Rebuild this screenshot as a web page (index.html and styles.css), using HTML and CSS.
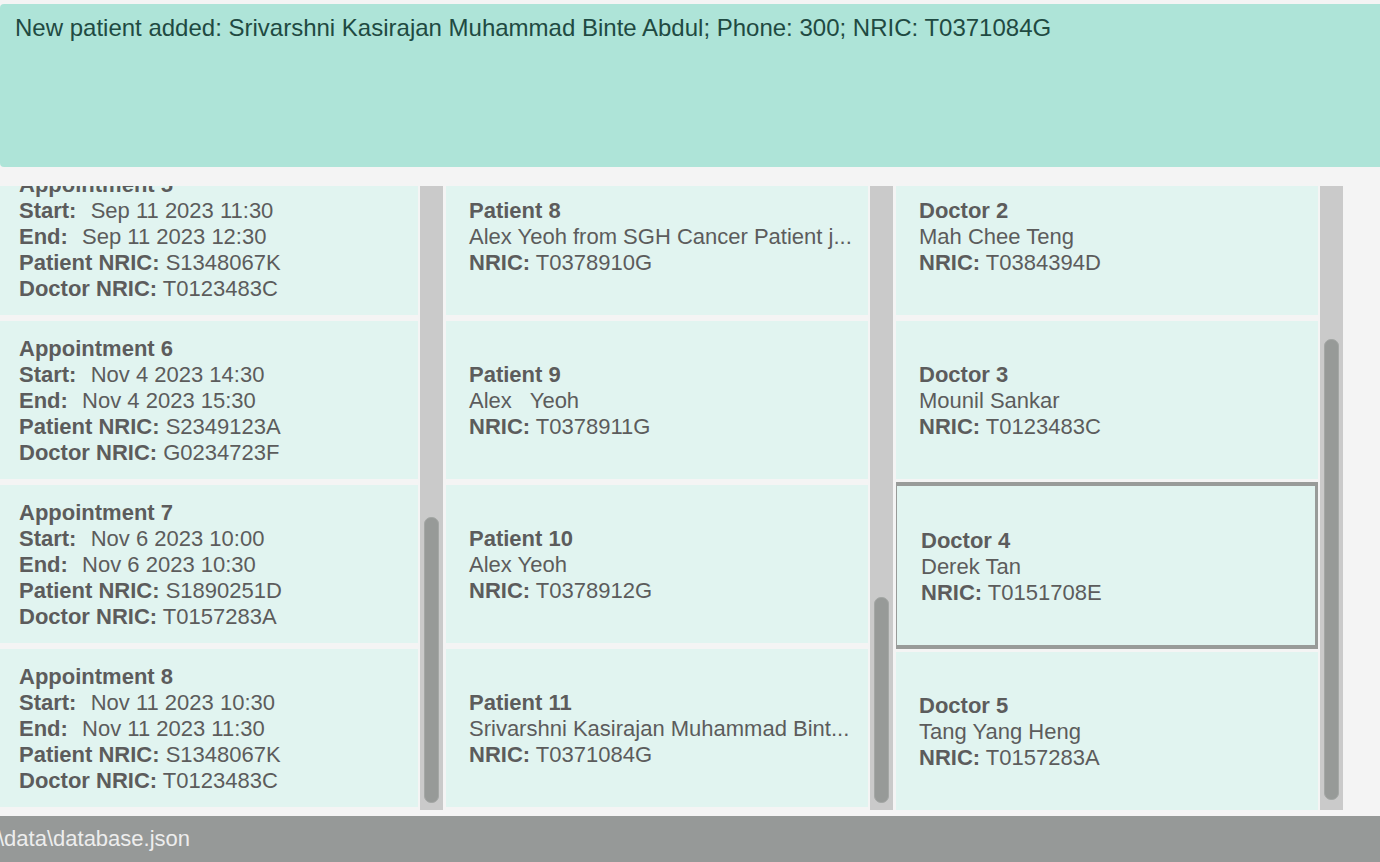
FILE: index.html
```html
<!DOCTYPE html>
<html lang="en">
<head>
<meta charset="utf-8">
<title>Clinic Assistant</title>
<link rel="stylesheet" href="styles.css">
</head>
<body>
<div class="app">
  <div class="result">
    <p class="result-text">New patient added: Srivarshni Kasirajan Muhammad Binte Abdul; Phone: 300; NRIC: T0371084G</p>
  </div>

  <div class="lists">
    <section class="panel">
      <div class="viewport">
        <div class="scroller">
          <div class="card appt">
            <div class="line title">Appointment 5</div>
            <div class="line"><b class="time">Start:</b>  Sep 11 2023 11:30</div>
            <div class="line"><b class="time">End:</b>  Sep 11 2023 12:30</div>
            <div class="line"><b>Patient NRIC:</b> S1348067K</div>
            <div class="line"><b>Doctor NRIC:</b> T0123483C</div>
          </div>
          <div class="card appt">
            <div class="line title">Appointment 6</div>
            <div class="line"><b class="time">Start:</b>  Nov 4 2023 14:30</div>
            <div class="line"><b class="time">End:</b>  Nov 4 2023 15:30</div>
            <div class="line"><b>Patient NRIC:</b> S2349123A</div>
            <div class="line"><b>Doctor NRIC:</b> G0234723F</div>
          </div>
          <div class="card appt">
            <div class="line title">Appointment 7</div>
            <div class="line"><b class="time">Start:</b>  Nov 6 2023 10:00</div>
            <div class="line"><b class="time">End:</b>  Nov 6 2023 10:30</div>
            <div class="line"><b>Patient NRIC:</b> S1890251D</div>
            <div class="line"><b>Doctor NRIC:</b> T0157283A</div>
          </div>
          <div class="card appt">
            <div class="line title">Appointment 8</div>
            <div class="line"><b class="time">Start:</b>  Nov 11 2023 10:30</div>
            <div class="line"><b class="time">End:</b>  Nov 11 2023 11:30</div>
            <div class="line"><b>Patient NRIC:</b> S1348067K</div>
            <div class="line"><b>Doctor NRIC:</b> T0123483C</div>
          </div>
        </div>
      </div>
      <div class="track"><div class="thumb" style="margin-top:331px;height:286px"></div></div>
    </section>

    <section class="panel">
      <div class="viewport">
        <div class="scroller">
          <div class="card person">
            <div class="line title">Patient 8</div>
            <div class="line">Alex Yeoh from SGH Cancer Patient j...</div>
            <div class="line"><b>NRIC:</b> T0378910G</div>
          </div>
          <div class="card person">
            <div class="line title">Patient 9</div>
            <div class="line">Alex   Yeoh</div>
            <div class="line"><b>NRIC:</b> T0378911G</div>
          </div>
          <div class="card person">
            <div class="line title">Patient 10</div>
            <div class="line">Alex Yeoh</div>
            <div class="line"><b>NRIC:</b> T0378912G</div>
          </div>
          <div class="card person">
            <div class="line title">Patient 11</div>
            <div class="line">Srivarshni Kasirajan Muhammad Bint...</div>
            <div class="line"><b>NRIC:</b> T0371084G</div>
          </div>
        </div>
      </div>
      <div class="track"><div class="thumb" style="margin-top:411px;height:206px"></div></div>
    </section>

    <section class="panel">
      <div class="viewport">
        <div class="scroller">
          <div class="card person">
            <div class="line title">Doctor 2</div>
            <div class="line">Mah Chee Teng</div>
            <div class="line"><b>NRIC:</b> T0384394D</div>
          </div>
          <div class="card person">
            <div class="line title">Doctor 3</div>
            <div class="line">Mounil Sankar</div>
            <div class="line"><b>NRIC:</b> T0123483C</div>
          </div>
          <div class="card person selected">
            <div class="line title">Doctor 4</div>
            <div class="line">Derek Tan</div>
            <div class="line"><b>NRIC:</b> T0151708E</div>
          </div>
          <div class="card person">
            <div class="line title">Doctor 5</div>
            <div class="line">Tang Yang Heng</div>
            <div class="line"><b>NRIC:</b> T0157283A</div>
          </div>
        </div>
      </div>
      <div class="track"><div class="thumb" style="margin-top:153px;height:461px"></div></div>
    </section>
  </div>

  <div class="status"><span class="status-text">\data\database.json</span></div>
</div>
</body>
</html>
```

FILE: styles.css
```css
* { box-sizing: border-box; }

html, body {
  margin: 0;
  padding: 0;
  background: #f4f4f4;
}

body {
  font-family: "Liberation Sans", Arial, sans-serif;
  width: 1380px;
  height: 862px;
  overflow: hidden;
}

.app {
  display: flex;
  flex-direction: column;
  height: 862px;
}

.result {
  margin-top: 4px;
  height: 163px;
  background: #aee4d8;
  border-radius: 4px 0 0 4px;
  padding: 10px 0 0 15px;
  flex-shrink: 0;
}

.result-text {
  margin: 0;
  font-size: 24px;
  line-height: 28px;
  color: #1f4a42;
  white-space: nowrap;
}

.lists {
  margin-top: 19px;
  height: 624px;
  display: flex;
  gap: 3px;
  flex-shrink: 0;
}

.panel {
  display: flex;
  gap: 2px;
  height: 100%;
}

.panel:first-child { width: 443px; }
.panel:not(:first-child) { width: 447px; }

.viewport {
  flex: 1;
  overflow: hidden;
  height: 100%;
}

.scroller {
  display: flex;
  flex-direction: column;
  gap: 6px;
  margin-top: -29px;
}

.card {
  height: 158px;
  background: #e1f4f0;
  display: flex;
  flex-direction: column;
  justify-content: center;
  flex-shrink: 0;
  color: #5c5c5c;
  font-size: 22px;
  padding-top: 2px;
}

.card.appt { padding-left: 19px; }
.card.person { padding-left: 23px; }

.card.selected {
  height: 167px;
  margin: -3px -1px -3px -3px;
  border: 4px solid #989b99;
  padding-left: 24px;
}

.line {
  line-height: 26px;
  white-space: pre;
}

.line.title,
.line b {
  font-weight: bold;
}

.line b.time {
  margin-right: 2px;
}

.track {
  width: 23px;
  height: 100%;
  background: #cacaca;
  padding: 0 4px;
  display: flex;
  flex-direction: column;
  flex-shrink: 0;
}

.thumb {
  width: 15px;
  background: #979a98;
  border: 1px solid #a4a7a5;
  border-radius: 7px;
}

.status {
  margin-top: 6px;
  height: 46px;
  background: #969998;
  display: flex;
  align-items: center;
  overflow: hidden;
  flex-shrink: 0;
}

.status-text {
  font-size: 22px;
  color: #ededed;
  margin-left: -2px;
  white-space: nowrap;
}
```
